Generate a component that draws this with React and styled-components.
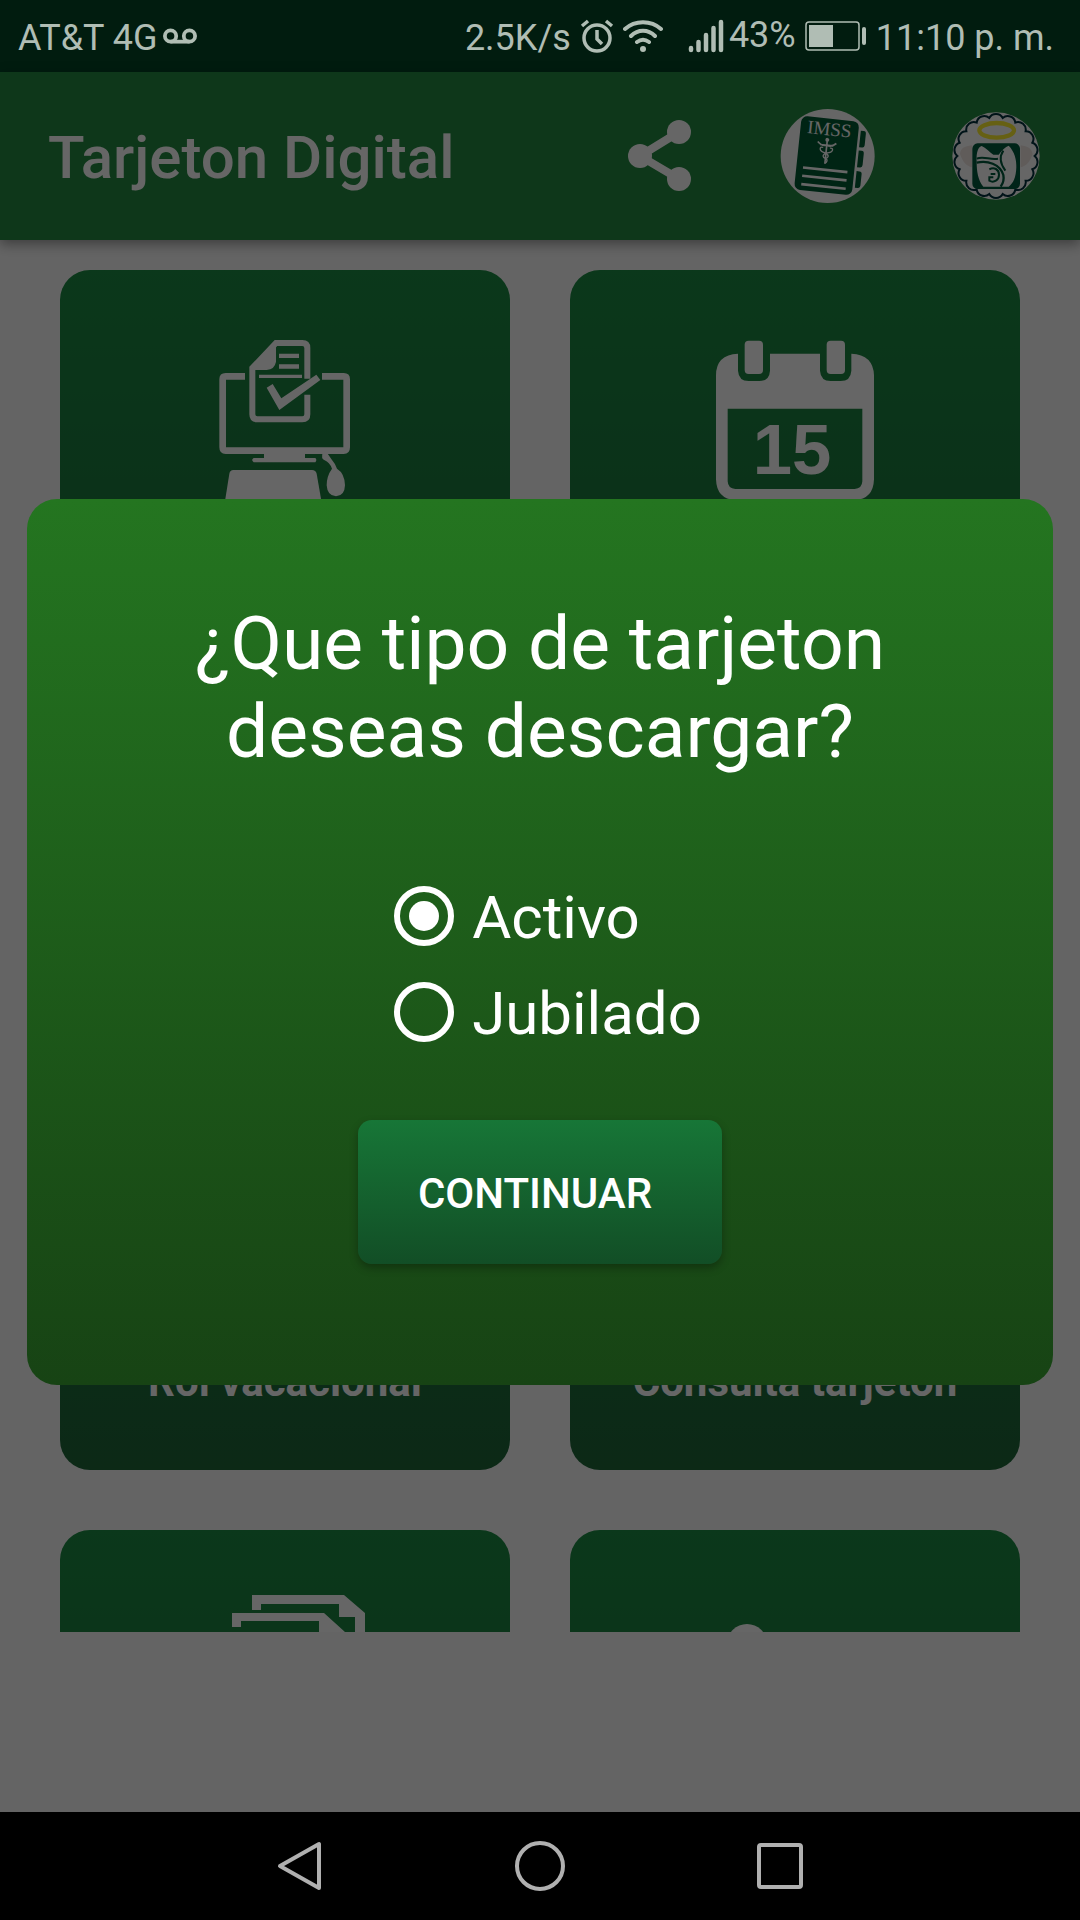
import React, { useState } from 'react'

import styled, { createGlobalStyle, css } from 'styled-components'

const GlobalStyle = createGlobalStyle`
	* {
		box-sizing: border-box;
	}

	body {
		margin: 0;
		background: #000;
		font-family: Roboto, 'Noto Sans', sans-serif;
	}
`

const ResetButton = css`
	border: none;
	margin: 0;
	padding: 0;
	background: none;
	font-family: inherit;
	cursor: pointer;
`

const Center = css`
	display: flex;
	justify-content: center;
	align-items: center;
`

const Screen = styled.div`
	display: flex;
	flex-direction: column;
	height: 100vh;
`

// Status bar

const StatusBar = styled.header`
	display: flex;
	justify-content: space-between;
	align-items: center;
	height: 72px;
	padding: 0 26px 0 18px;
	background: #011c0f;
	color: #b0bdb4;
	font-size: 36px;
	line-height: 42px;
`

const StatusGroup = styled.div`
	display: flex;
	align-items: center;
	gap: ${props => props.$gap}px;
`

const StatusText = styled.span`
	padding-top: 4px;
`

const BatteryLevel = styled.span`
	padding-bottom: 2px;
`

const Signal = styled.div`
	display: flex;
	align-items: center;
	gap: 5px;
	padding-left: 16px;
`

// App bar

const Stage = styled.div`
	position: relative;
	display: flex;
	flex-direction: column;
	flex: 1;
	min-height: 0;
	background: #fafafa;
`

const AppBar = styled.div`
	display: flex;
	align-items: center;
	flex-shrink: 0;
	height: 168px;
	padding-left: 48px;
	background: #238941;
	box-shadow: 0 4px 12px rgba(0, 0, 0, 0.4);
	z-index: 1;
`

const AppTitle = styled.h1`
	flex: 1;
	margin: 0;
	padding-top: 4px;
	color: #fff;
	font-size: 60px;
	font-weight: 500;
	line-height: 72px;
`

const AppBarButton = styled.button`
	${ResetButton}
	${Center}
	width: 168px;
	height: 168px;
`

// Cards

const Scroller = styled.main`
	flex: 1;
	min-height: 0;
	overflow-y: auto;
	scrollbar-width: none;
`

const CardGrid = styled.div`
	display: grid;
	grid-template-columns: 1fr 1fr;
	gap: 60px;
	padding: 30px 60px;
`

const Card = styled.button`
	${ResetButton}
	display: flex;
	flex-direction: column;
	align-items: center;
	justify-content: space-between;
	height: 570px;
	padding: 60px 30px 63px;
	border-radius: 30px;
	background: linear-gradient(#1c8c44, #1e6639);
	color: #fff;
	font-size: 42px;
	font-weight: 700;
	line-height: 50px;
`

const BannerSlot = styled.div`
	flex-shrink: 0;
	height: 180px;
`

// Dialog

const Scrim = styled.div`
	${Center}
	position: absolute;
	inset: 0;
	z-index: 2;
	padding: 0 27px;
	background: rgba(0, 0, 0, 0.6);
`

const Dialog = styled.form`
	display: flex;
	flex-direction: column;
	align-items: center;
	width: 100%;
	padding: 100px 60px 121px;
	border-radius: 30px;
	background: linear-gradient(#247520, #174314);
	color: #fff;
`

const DialogTitle = styled.h2`
	max-width: 760px;
	margin: 0 0 93px;
	font-size: 75px;
	font-weight: 400;
	line-height: 88px;
	text-align: center;
`

const Options = styled.div`
	display: flex;
	flex-direction: column;
	padding-left: 16px;
	margin-bottom: 60px;
`

const Option = styled.label`
	display: flex;
	align-items: center;
	gap: 18px;
	height: 96px;
	font-size: 60px;
	line-height: 72px;
	cursor: pointer;
`

const OptionText = styled.span`
	padding-top: 4px;
`

const Radio = styled.input`
	${Center}
	appearance: none;
	width: 60px;
	height: 60px;
	margin: 0;
	border: 6px solid #fff;
	border-radius: 50%;

	&:checked::before {
		content: '';
		width: 30px;
		height: 30px;
		border-radius: 50%;
		background: #fff;
	}
`

const ContinueButton = styled.button`
	${ResetButton}
	height: 144px;
	padding: 4px 70px 0 60px;
	border-radius: 14px;
	background: linear-gradient(#177637, #124e26);
	box-shadow: 0 4px 8px rgba(0, 0, 0, 0.3);
	color: #fff;
	font-size: 42px;
	font-weight: 500;
	line-height: 50px;
	text-transform: uppercase;
`

// Navigation bar

const NavBar = styled.nav`
	display: flex;
	flex-shrink: 0;
	height: 108px;
	padding: 0 calc(100% / 6);
	background: #000;
`

const NavButton = styled.button`
	${ResetButton}
	${Center}
	flex: 1;
`

const VoicemailIcon = () => (
	<svg width='34' height='16' viewBox='0 0 36 16' fill='none' stroke='currentColor' strokeWidth='4'>
		<circle cx='8' cy='8' r='6' />
		<circle cx='28' cy='8' r='6' />
		<path d='M8 14H28' />
	</svg>
)

const AlarmIcon = () => (
	<svg width='34' height='34' viewBox='0 0 34 34' fill='none' stroke='currentColor' strokeWidth='3.5'>
		<circle cx='17' cy='19' r='13' />
		<path d='M17 11V20L22 25M2 7L8 2M26 2L32 7' />
	</svg>
)

const WifiIcon = () => (
	<svg width='40' height='34' viewBox='0 0 40 34' fill='none' stroke='currentColor' strokeWidth='4' strokeLinecap='round'>
		<path d='M2 10C12 1 28 1 38 10M8 17C15 10 25 10 32 17M14 23C18 20 22 20 26 23' />
		<circle cx='20' cy='30' r='3' fill='currentColor' stroke='none' />
	</svg>
)

const SignalIcon = () => (
	<svg width='36' height='34' viewBox='0 0 36 34' fill='none' stroke='currentColor' strokeWidth='4.5' strokeLinecap='round'>
		<path d='M3 29V31M10.5 23V31M18 16V31M25.5 9V31M33 3V31' />
	</svg>
)

const BatteryIcon = () => (
	<svg width='62' height='30' viewBox='0 0 62 30' fill='none' stroke='currentColor'>
		<rect x='1' y='1' width='53' height='28' rx='3' strokeWidth='1.5' />
		<rect x='4' y='4' width='24' height='22' fill='currentColor' stroke='none' />
		<path d='M59 8V22' strokeWidth='4' strokeLinecap='round' />
	</svg>
)

const ShareIcon = () => (
	<svg width='72' height='72' viewBox='0 0 72 72' fill='#fff'>
		<path d='M55 12L16 36L55 59' fill='none' stroke='#fff' strokeWidth='8' />
		<circle cx='16' cy='36' r='12' />
		<circle cx='55' cy='12' r='12' />
		<circle cx='55' cy='59' r='12' />
	</svg>
)

const NotebookIcon = () => (
	<svg width='96' height='96' viewBox='541 84 288 288'>
		<circle cx='684' cy='228' r='141' fill='#fff' />
		<g transform='rotate(6 684 228)'>
			<rect x='594' y='116' width='174' height='222' rx='18' fill='#005a32' />
			<path d='M775 142h9q7 0 7 8v34q0 8-7 8h-9zM775 202h9q7 0 7 8v34q0 8-7 8h-9zM775 264h9q7 0 7 8v34q0 8-7 8h-9z' fill='#005a32' />
			<text x='681' y='166' fill='#fff' fontFamily='"Liberation Serif", serif' fontSize='57' textAnchor='middle'>
				IMSS
			</text>
			<g fill='none' stroke='#fff' strokeWidth='5'>
				<path d='M678 184V252M650 188Q664 202 678 196Q692 202 706 188M658 196H698' />
				<path d='M678 219C654 218 656 200 668 204M678 219C702 218 700 200 688 204M678 220C666 227 670 234 678 236C688 240 682 248 678 250M678 220C690 227 686 234 678 236' strokeWidth='4' />
				<path d='M614 270H748M614 295H748M614 320H748' strokeWidth='8' />
			</g>
			<circle cx='678' cy='180' r='6' fill='#fff' />
		</g>
	</svg>
)

// Ring of outward bumps around the badge
const ScallopPath = (cx, cy, radius, count) => {
	const point = index => {
		const angle = (index / count) * Math.PI * 2
		return `${cx + radius * Math.cos(angle)} ${cy + radius * Math.sin(angle)}`
	}

	const arcs = Array.from({ length: count }, (_, index) => `A23 23 0 0 1 ${point(index + 1)}`)

	return `M${point(0)}${arcs.join('')}Z`
}

const BadgeIcon = () => (
	<svg width='96' height='96' viewBox='1044 84 288 288'>
		<circle cx='1188' cy='228' r='131' fill='#fff' />
		<path d={ScallopPath(1188, 228, 116, 18)} fill='none' stroke='#00303c' strokeWidth='6' />
		<path d='M1116 196C1092 200 1082 204 1080 222C1088 246 1100 258 1116 262ZM1262 196C1284 200 1294 204 1298 222C1290 246 1278 258 1262 262Z' fill='#f0e6e2' />
		<ellipse cx='1190' cy='151' rx='52' ry='22' fill='none' stroke='#fff030' strokeWidth='13' />
		<rect x='1117' y='190' width='143' height='137' rx='16' fill='#005a3c' />
		<path d='M1130 245C1128 215 1136 200 1145 198C1158 204 1168 216 1180 224H1196C1206 210 1216 200 1226 197C1244 215 1250 240 1249 262C1248 292 1240 310 1226 320H1150C1134 300 1130 275 1130 245Z' fill='#fff' />
		<g fill='none' stroke='#005a3c'>
			<path d='M1130 236C1150 228 1170 240 1194 236' strokeWidth='6' />
			<path d='M1130 248C1162 240 1200 252 1210 285C1213 300 1208 312 1202 320' strokeWidth='7' />
			<path d='M1210 212C1196 232 1200 250 1216 272' strokeWidth='6' />
			<path d='M1168 268C1182 260 1197 268 1197 284C1197 300 1182 310 1168 302V292H1180M1172 282H1186' strokeWidth='6' />
		</g>
	</svg>
)

const ComputerIcon = () => (
	<svg width='180' height='180' viewBox='-15 30 540 540' fill='#fff'>
		<path d='M135 169H77Q68 169 68 178V382Q68 392 77 392H431Q440 392 440 382V178Q440 169 431 169H366' fill='none' stroke='#fff' strokeWidth='20' />
		<path d='M192 400H315V414H346Q352 420 346 427H161Q152 420 161 414H192Z' />
		<path d='M322 176V84Q322 69 307 69H228L157 144V283Q157 298 172 298H307Q322 298 322 283V224' fill='none' stroke='#fff' strokeWidth='18' />
		<path d='M228 69V125Q224 148 200 150H157Z' />
		<path d='M237 101H297V114H237ZM237 133H297V146H237ZM177 164H306V174H177Z' />
		<path d='M200 203L218 192L244 235L349 164L361 180L238 270Z' />
		<path d='M100 450H336Q347 450 350 461L374 600H66L88 461Q90 450 100 450Z' />
		<path d='M368 398Q362 416 374 421Q388 426 396 446Q380 468 380 496Q382 528 408 529Q434 528 435 496Q434 460 411 446Q408 434 396 420L382 400Z' />
	</svg>
)

const CalendarIcon = () => (
	<svg width='180' height='180' viewBox='45 30 540 540' fill='#fff'>
		<path
			d='M144 101Q78 104 78 166V478Q80 538 136 540H494Q550 538 552 478V166Q550 104 484 101V152Q482 183 452 183H422Q392 183 390 152V101H240V152Q238 183 208 183H176Q146 183 144 152ZM113 266H517V484Q516 506 494 507H136Q114 506 113 484Z'
			fillRule='evenodd'
		/>
		<rect x='164' y='62' width='55' height='100' rx='12' />
		<rect x='410' y='62' width='55' height='100' rx='12' />
		<text x='306' y='462' fontFamily='"Liberation Sans", sans-serif' fontWeight='700' fontSize='212' textAnchor='middle'>
			15
		</text>
	</svg>
)

const DocumentsIcon = () => (
	<svg width='180' height='180' viewBox='0 0 180 180' fill='#fff'>
		<path d='M57 20V5H149L170 23V140H152V131H160V27H144V14H66V20Z' />
		<path d='M37 37V23H129L150 42V160H37V47H46V151H141V48H124V31H46V37Z' />
	</svg>
)

const PersonIcon = () => (
	<svg width='180' height='180' viewBox='0 0 180 180' fill='#fff'>
		<circle cx='42' cy='54' r='20' />
		<path d='M8 140Q8 84 42 84Q76 84 76 140Z' />
		<path d='M96 80H170V92H96ZM96 104H170V116H96ZM96 128H150V140H96Z' />
	</svg>
)

const BackIcon = () => (
	<svg width='50' height='54' viewBox='0 0 50 54' fill='none' stroke='#b0b0b0' strokeWidth='4' strokeLinejoin='round'>
		<path d='M5 27L44 5V49Z' />
	</svg>
)

const HomeIcon = () => (
	<svg width='54' height='54' viewBox='0 0 54 54' fill='none' stroke='#b0b0b0' strokeWidth='4'>
		<circle cx='27' cy='27' r='23' />
	</svg>
)

const RecentsIcon = () => (
	<svg width='54' height='54' viewBox='0 0 54 54' fill='none' stroke='#b0b0b0' strokeWidth='4'>
		<rect x='6' y='6' width='42' height='42' rx='2' />
	</svg>
)

const Cards = [
	{ id: 'computer', Icon: ComputerIcon },
	{ id: 'calendar', Icon: CalendarIcon },
	{ id: 'rol', title: 'Rol vacacional' },
	{ id: 'consulta', title: 'Consulta tarjeton' },
	{ id: 'documents', Icon: DocumentsIcon },
	{ id: 'person', Icon: PersonIcon },
]

const Types = ['Activo', 'Jubilado']

const App = () => {
	const [Type, SetType] = useState('Activo')

	const OnSubmit = event => {
		event.preventDefault()
	}

	return (
		<>
			<GlobalStyle />
			<Screen>
				<StatusBar>
					<StatusGroup $gap={5}>
						<StatusText>AT&amp;T 4G</StatusText>
						<VoicemailIcon />
					</StatusGroup>
					<StatusGroup $gap={9}>
						<StatusText>2.5K/s</StatusText>
						<AlarmIcon />
						<WifiIcon />
						<Signal>
							<SignalIcon />
							<BatteryLevel>43%</BatteryLevel>
						</Signal>
						<BatteryIcon />
						<StatusText>11:10 p. m.</StatusText>
					</StatusGroup>
				</StatusBar>
				<Stage>
					<AppBar>
						<AppTitle>Tarjeton Digital</AppTitle>
						<AppBarButton type='button' aria-label='Compartir'>
							<ShareIcon />
						</AppBarButton>
						<AppBarButton type='button' aria-label='Directorio'>
							<NotebookIcon />
						</AppBarButton>
						<AppBarButton type='button' aria-label='Acerca de'>
							<BadgeIcon />
						</AppBarButton>
					</AppBar>
					<Scroller>
						<CardGrid>
							{Cards.map(({ id, title, Icon }) => (
								<Card key={id} type='button' aria-label={title || id}>
									{Icon ? <Icon /> : <span />}
									{title && <span>{title}</span>}
								</Card>
							))}
						</CardGrid>
					</Scroller>
					<BannerSlot />
					<Scrim>
						<Dialog role='dialog' aria-labelledby='dialogTitle' onSubmit={OnSubmit}>
							<DialogTitle id='dialogTitle'>¿Que tipo de tarjeton deseas descargar?</DialogTitle>
							<Options role='radiogroup' aria-labelledby='dialogTitle'>
								{Types.map(type => (
									<Option key={type} htmlFor={type}>
										<Radio
											type='radio'
											id={type}
											name='type'
											value={type}
											checked={Type === type}
											onChange={() => SetType(type)}
										/>
										<OptionText>{type}</OptionText>
									</Option>
								))}
							</Options>
							<ContinueButton type='submit'>Continuar</ContinueButton>
						</Dialog>
					</Scrim>
				</Stage>
				<NavBar>
					<NavButton type='button' aria-label='Atrás'>
						<BackIcon />
					</NavButton>
					<NavButton type='button' aria-label='Inicio'>
						<HomeIcon />
					</NavButton>
					<NavButton type='button' aria-label='Recientes'>
						<RecentsIcon />
					</NavButton>
				</NavBar>
			</Screen>
		</>
	)
}

export default App
